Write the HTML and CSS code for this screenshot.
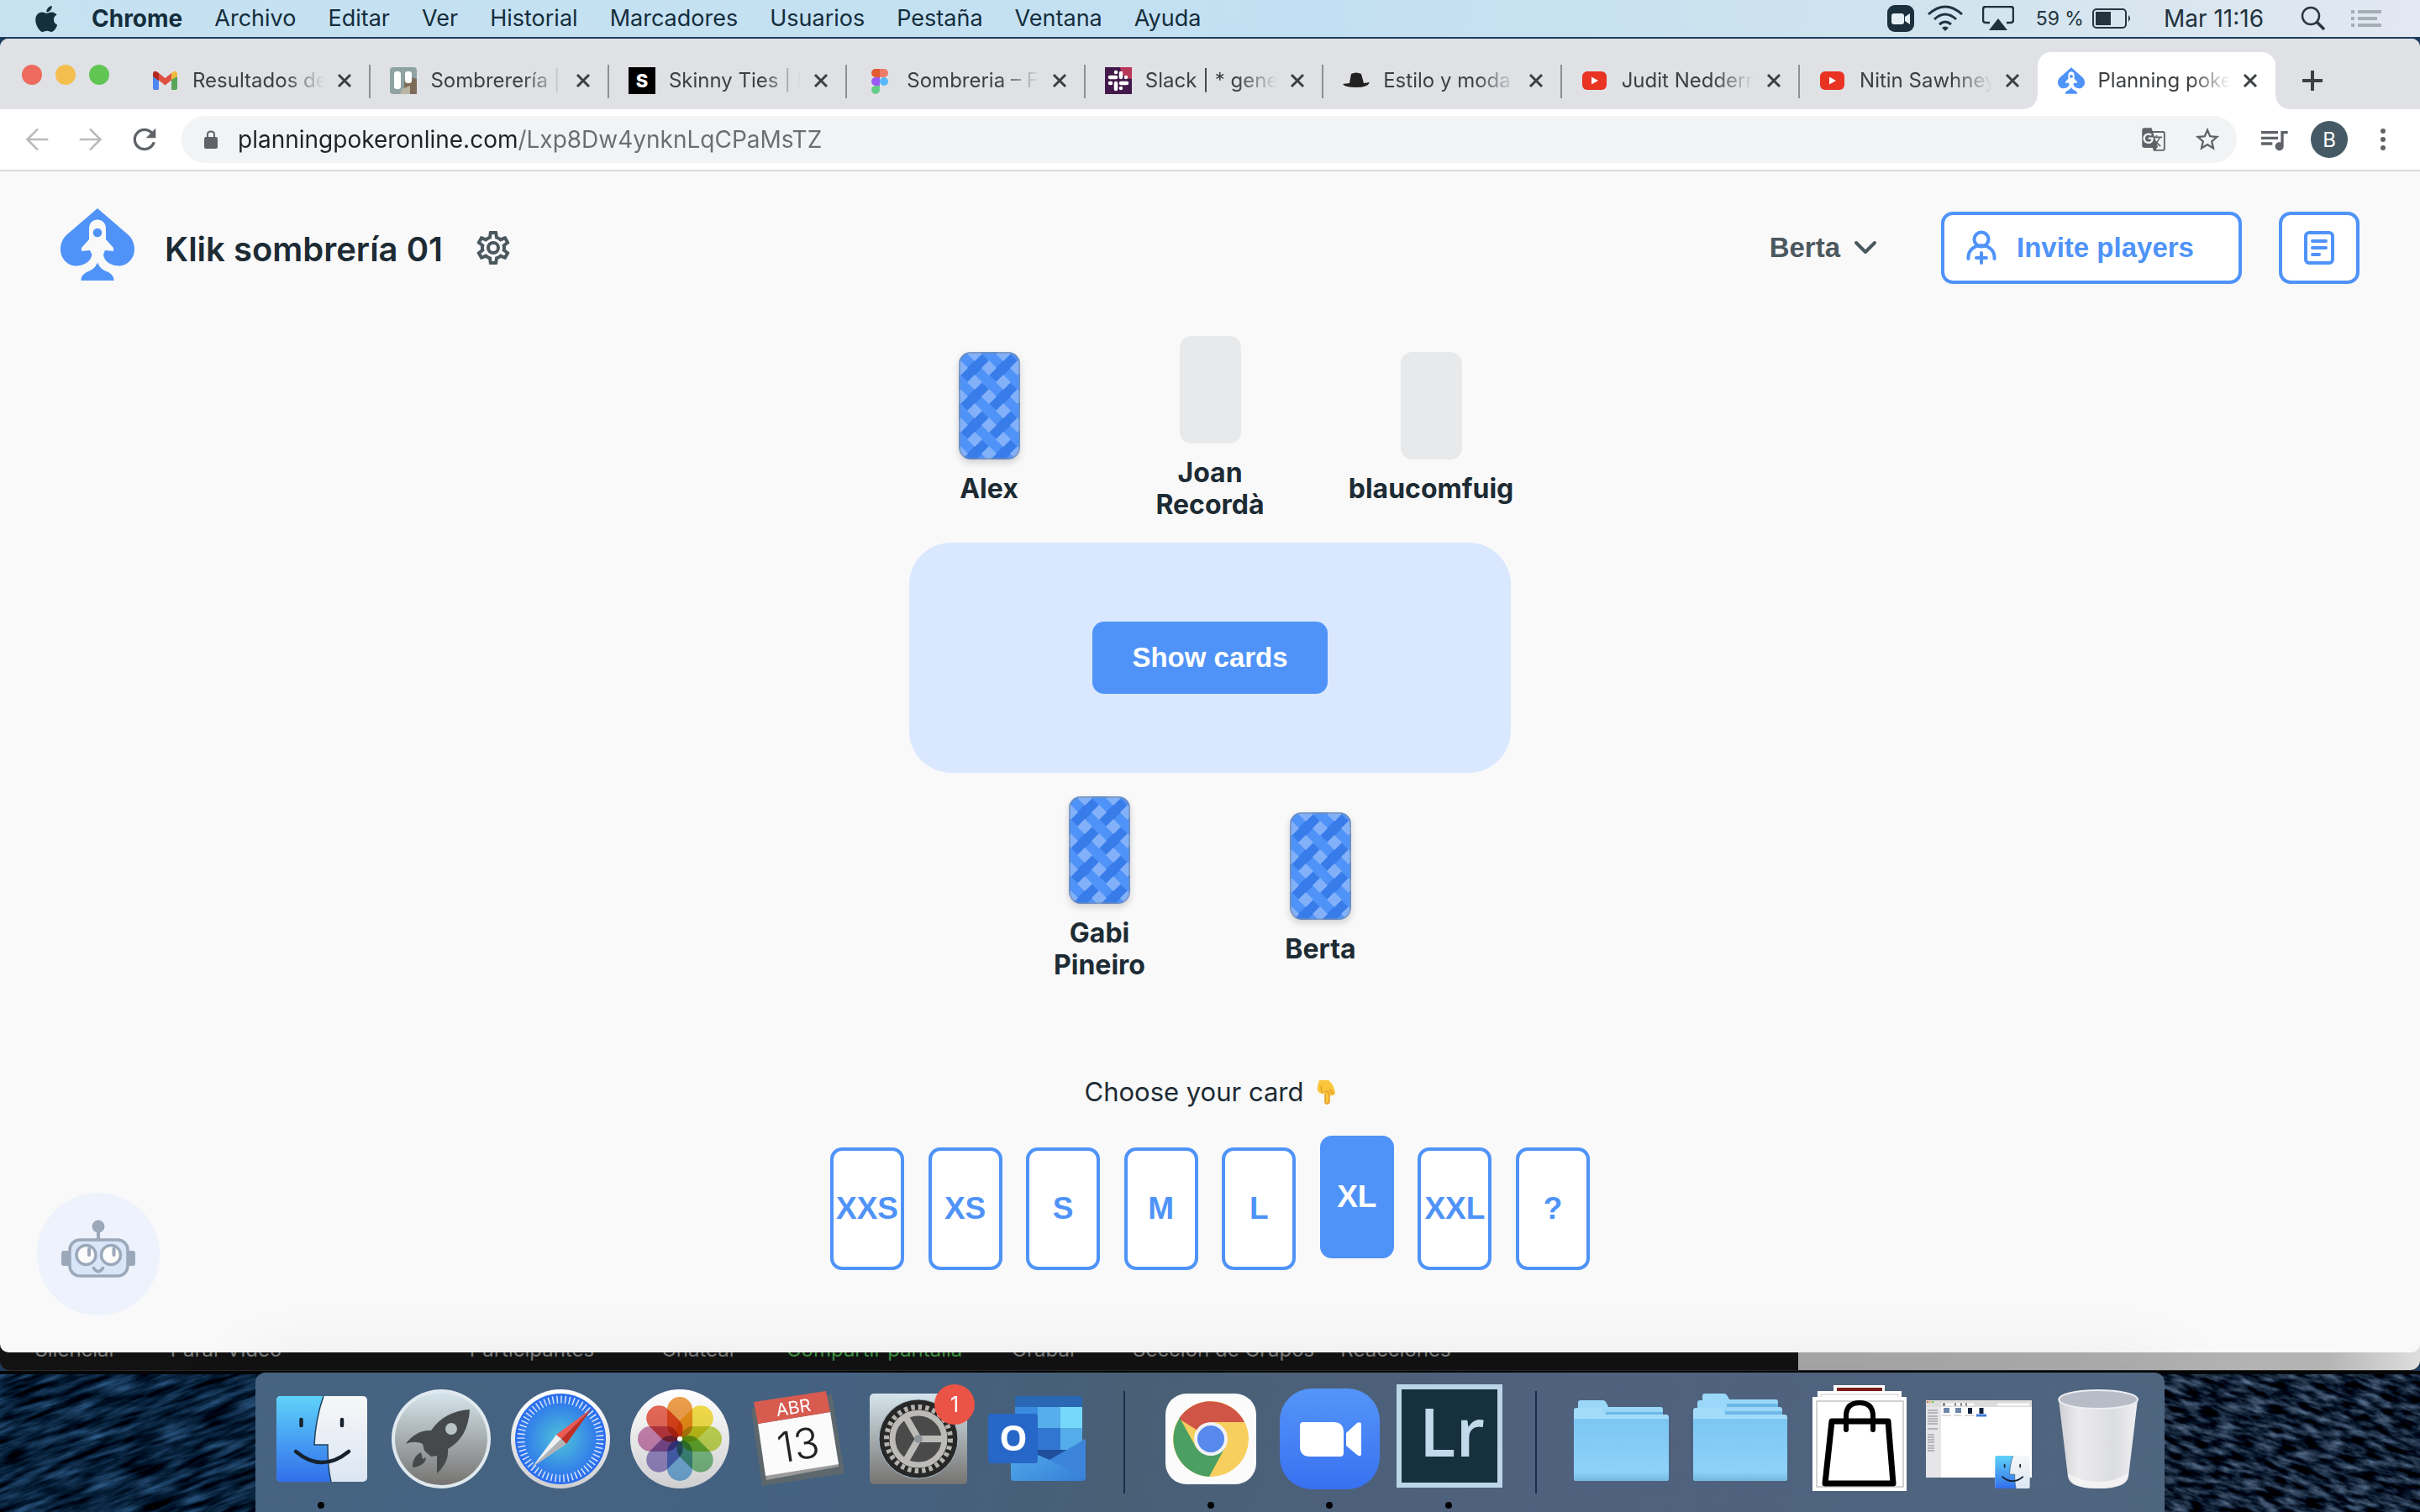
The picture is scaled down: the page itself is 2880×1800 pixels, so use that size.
FILE: index.html
```html
<!DOCTYPE html>
<html lang="es">
<head>
<meta charset="utf-8">
<title>Planning poker</title>
<link rel="stylesheet" href="styles.css">
</head>
<body>

<svg class="defs" aria-hidden="true">
  <defs>
    <pattern id="weave" x="2" y="2" width="34" height="34" patternUnits="userSpaceOnUse">
      <rect width="34" height="34" fill="#4f93f8"/>
      <path d="M0 25L9 34L34 9L25 0Z" fill="#387cea"/>
      <path d="M8 0H26L17 9ZM8 34H26L17 25ZM0 8V26L9 17ZM34 8V26L25 17Z" fill="#83b1f9"/>
    </pattern>
    <linearGradient id="finderBlue" x2="0" y2="1"><stop stop-color="#5fd2f9"/><stop offset="1" stop-color="#326fec"/></linearGradient>
    <linearGradient id="finderWhite" x2="0" y2="1"><stop stop-color="#f7f7f8"/><stop offset="1" stop-color="#dbe6f3"/></linearGradient>
    <linearGradient id="steel" x2="0" y2="1"><stop stop-color="#d5e5ec"/><stop offset="1" stop-color="#767472"/></linearGradient>
    <linearGradient id="silver" x2="0" y2="1"><stop stop-color="#fff"/><stop offset="1" stop-color="#cfcfd1"/></linearGradient>
    <radialGradient id="sky"><stop stop-color="#4fc3d8"/><stop offset="1" stop-color="#2a6bef"/></radialGradient>
    <linearGradient id="zoomBlue" x2="0" y2="1"><stop stop-color="#5595f8"/><stop offset="1" stop-color="#3871f1"/></linearGradient>
    <linearGradient id="folderBlue" x2="0" y2="1"><stop stop-color="#7dc6f3"/><stop offset=".85" stop-color="#8dd2f8"/><stop offset="1" stop-color="#74b7e0"/></linearGradient>
    <linearGradient id="glass"><stop stop-color="#cfd0d4"/><stop offset=".25" stop-color="#ebebed"/><stop offset=".7" stop-color="#dcdde0"/><stop offset="1" stop-color="#f0f0f2"/></linearGradient>
    <linearGradient id="mail" x2="1" y2="1"><stop stop-color="#55b0ee"/><stop offset="1" stop-color="#357fd6"/></linearGradient>
    <symbol id="finder" viewBox="0 0 108 102">
      <rect width="108" height="102" rx="5" fill="url(#finderWhite)"/>
      <path d="M5 0H56C49 20 46 38 45 58H61C61 76 62 90 65 102H5Q0 102 0 97V5Q0 0 5 0Z" fill="url(#finderBlue)"/>
      <path d="M56 0C49 20 46 38 45 58H61C61 76 62 90 65 102" fill="none" stroke="#20435f" stroke-width="1.500"/>
      <path d="M29.500 28V35M78 28V35M23 66Q54 92 86 66" fill="none" stroke="#15222e" stroke-width="4.500" stroke-linecap="round"/>
    </symbol>
    <symbol id="spade" viewBox="0 0 88 86">
      <path d="M44 0L80 31C86 36 88 43 88 49C88 60 79 68.500 70 68.500C61 68.500 52 64 51 55L53 50L63 51V47L54 37V24C54 10 34 10 34 24V37L25 47V51L35 50L37.500 55C36 64 27 68.500 18 68.500C9 68.500 0 60 0 49C0 43 2 36 8 31Z"/>
      <circle cx="44" cy="29" r="5.300"/>
      <path d="M44 64.500C47 72 52 74 57 76C62 79 63.500 82 63.500 86H24.500C24.500 82 26 79 31 76C36 74 41 72 44 64.500Z"/>
    </symbol>
    <symbol id="close" viewBox="0 0 20 20"><path d="M3 3L17 17M17 3L3 17" stroke="#3c4043" stroke-width="3"/></symbol>
    <symbol id="youtube" viewBox="0 0 32 32"><rect x="1" y="5" width="29" height="22" rx="6" fill="#e93323"/><path d="M12 11.500L20 16L12 20.500Z" fill="#fff"/></symbol>
  </defs>
</svg>

<header class="menubar">
  <nav class="menus" aria-label="Menú">
    <svg class="apple" viewBox="4 32 368 448" fill="#162f3e"><path d="M318.700 268.700c-.2-36.700 16.400-64.400 50-84.800-18.800-26.900-47.200-41.700-84.700-44.600-35.500-2.800-74.300 20.700-88.500 20.700-15 0-49.400-19.700-76.400-19.700C63.300 141.200 4 184.800 4 273.500q0 39.300 14.400 81.200c12.800 36.700 59 126.700 107.200 125.200 25.200-.6 43-17.900 75.800-17.900 31.800 0 48.300 17.900 76.400 17.900 48.600-.7 90.400-82.500 102.600-119.300-65.200-30.700-61.700-90-61.700-91.900zm-56.600-164.200c27.300-32.400 24.800-61.900 24-72.500-24.100 1.400-52 16.400-67.900 34.900-17.500 19.800-27.800 44.300-25.600 71.900 26.100 2 49.900-11.400 69.500-34.300z"/></svg>
    <a class="app-name" href="#">Chrome</a>
    <a href="#">Archivo</a>
    <a href="#">Editar</a>
    <a href="#">Ver</a>
    <a href="#">Historial</a>
    <a href="#">Marcadores</a>
    <a href="#">Usuarios</a>
    <a href="#">Pestaña</a>
    <a href="#">Ventana</a>
    <a href="#">Ayuda</a>
  </nav>
  <div class="status">
    <svg width="32" height="32" viewBox="0 0 32 32"><rect width="32" height="32" rx="9" fill="#1a303d"/><rect x="5" y="10" width="15" height="13" rx="3" fill="#e4eff5"/><path d="M21 14L27 10V23L21 19Z" fill="#e4eff5"/></svg>
    <svg class="wifi" width="42" height="32" viewBox="0 0 42 32" fill="none" stroke="#1f3441" stroke-width="3"><path d="M1 11Q21 -7 41 11M8 17Q21 5 34 17M14 23Q21 17 28 23"/><path d="M17 27L21 31L25 27Q21 24 17 27Z" fill="#1f3441" stroke="none"/></svg>
    <svg class="airplay" width="38" height="30" viewBox="0 0 38 30"><path d="M9 20H4Q1 20 1 17V4Q1 1 4 1H34Q37 1 37 4V17Q37 20 34 20H29" fill="none" stroke="#22323d" stroke-width="2.500"/><path d="M19 15L30 29H8Z" fill="#22323d"/></svg>
    <span class="battery-level">59 %</span>
    <svg class="battery" width="47" height="24" viewBox="0 0 47 24"><rect x="1" y="1" width="39" height="22" rx="4" fill="none" stroke="#25343f" stroke-width="2"/><rect x="4" y="4" width="18" height="16" fill="#25343f"/><path d="M43 8Q47 12 43 16Z" fill="#25343f"/></svg>
    <time class="clock">Mar 11:16</time>
    <svg class="search" width="30" height="30" viewBox="0 0 30 30" fill="none" stroke="#2a3640" stroke-width="2.500"><circle cx="12" cy="12" r="10"/><path d="M19 19L28 28" stroke-width="3.500"/></svg>
    <svg width="36" height="22" viewBox="0 0 36 22" stroke="#a7adb5" stroke-width="4"><path d="M0 3H4M8 3H36M0 11H4M8 11H31M0 19H4M8 19H36"/></svg>
  </div>
</header>

<main class="window">
  <div class="tabstrip">
    <div class="lights"><span class="light red"></span><span class="light yellow"></span><span class="light green"></span></div>
    <div class="tabs">
      <div class="tab">
        <svg class="favicon" viewBox="0 0 32 32"><path d="M1 8V25Q1 27 3 27H8V14Z" fill="#4e87ee"/><path d="M30 8V25Q30 27 28 27H23V14Z" fill="#57a55b"/><path d="M23 15V7L26 5Q30 4 30 9V11Z" fill="#f3bb41"/><path d="M1 9Q1 4 5 5L8 7V16L1 11Z" fill="#b3271e"/><path d="M8 7L15.500 13L23 7V15.500L15.500 21.500L8 15.500Z" fill="#df5040"/></svg>
        <span class="tab-title">Resultados de</span><button class="tab-close" aria-label="Cerrar"><svg><use href="#close"/></svg></button>
      </div>
      <div class="tab">
        <svg class="favicon" viewBox="0 0 32 32"><rect width="32" height="32" rx="4" fill="#8ea3a2"/><path d="M18 10L32 14V32H16Z" fill="#7d6b58"/><path d="M14 26L24 22V32H12Z" fill="#b9b5a3"/><rect x="5" y="5" width="8" height="21" rx="3" fill="#fff"/><rect x="18" y="5" width="8" height="14" rx="3" fill="#fff"/></svg>
        <span class="tab-title">Sombrerería |</span><button class="tab-close" aria-label="Cerrar"><svg><use href="#close"/></svg></button>
      </div>
      <div class="tab">
        <svg class="favicon" viewBox="0 0 32 32"><rect width="32" height="32"/><text x="16" y="24" text-anchor="middle" font-family="Inter, sans-serif" font-weight="800" font-size="22" fill="#fff">S</text></svg>
        <span class="tab-title">Skinny Ties | I</span><button class="tab-close" aria-label="Cerrar"><svg><use href="#close"/></svg></button>
      </div>
      <div class="tab">
        <svg class="favicon" viewBox="0 0 32 32"><path d="M16 2H11A5 5 0 0 0 11 12H16Z" fill="#e25a30"/><path d="M16 2H21A5 5 0 0 1 21 12H16Z" fill="#ee7b69"/><path d="M16 12H11A5 5 0 0 0 11 22H16Z" fill="#9a59f7"/><circle cx="21" cy="17" r="5" fill="#57b8fa"/><path d="M16 22H11A5 5 0 1 0 16 27Z" fill="#66cd88"/></svg>
        <span class="tab-title">Sombreria – F</span><button class="tab-close" aria-label="Cerrar"><svg><use href="#close"/></svg></button>
      </div>
      <div class="tab">
        <svg class="favicon" viewBox="0 0 32 32"><rect width="32" height="32" fill="#42194a"/><path d="M18 0H32V14Q20 14 18 0Z" fill="#b8385a"/><g stroke="#fff" stroke-width="4.500" stroke-linecap="round"><path d="M13 6V6.100M6 12H13M19 7V12M25 12V12.100M6 19H7M13 19V26M19 19H26M19 25V25.100"/></g></svg>
        <span class="tab-title">Slack | * gene</span><button class="tab-close" aria-label="Cerrar"><svg><use href="#close"/></svg></button>
      </div>
      <div class="tab">
        <svg class="favicon" viewBox="0 0 32 32" fill="#22211f"><path d="M8 19L10 8Q16 5 22 8L25 19L32 18Q30 24 16 24Q2 24 0 20Z"/></svg>
        <span class="tab-title">Estilo y moda</span><button class="tab-close" aria-label="Cerrar"><svg><use href="#close"/></svg></button>
      </div>
      <div class="tab">
        <svg class="favicon"><use href="#youtube"/></svg>
        <span class="tab-title">Judit Nedderm</span><button class="tab-close" aria-label="Cerrar"><svg><use href="#close"/></svg></button>
      </div>
      <div class="tab last">
        <svg class="favicon"><use href="#youtube"/></svg>
        <span class="tab-title">Nitin Sawhney</span><button class="tab-close" aria-label="Cerrar"><svg><use href="#close"/></svg></button>
      </div>
      <div class="tab active">
        <svg class="favicon" fill="#4f93f8"><use href="#spade"/></svg>
        <span class="tab-title">Planning poke</span><button class="tab-close" aria-label="Cerrar"><svg><use href="#close"/></svg></button>
      </div>
    </div>
    <button class="new-tab" aria-label="Nueva pestaña"><svg width="26" height="26" viewBox="0 0 26 26"><path d="M13 1V25M1 13H25" stroke="#3c4043" stroke-width="4"/></svg></button>
  </div>

  <div class="toolbar">
    <button class="nav-button off" aria-label="Atrás"><svg viewBox="0 0 24 24" width="40" height="40"><path d="M20 11.200H7L13.200 5L12 4L4 12L12 20L13.200 19L7 12.800H20Z"/></svg></button>
    <button class="nav-button off" aria-label="Adelante"><svg viewBox="0 0 24 24" width="40" height="40"><path d="M4 11.200H17L10.800 5L12 4L20 12L12 20L10.800 19L17 12.800H4Z"/></svg></button>
    <button class="nav-button" aria-label="Recargar"><svg viewBox="0 0 24 24" width="40" height="40"><path d="M17.650 6.350C16.200 4.900 14.210 4 12 4c-4.420 0-7.990 3.580-7.990 8s3.570 8 7.990 8c3.730 0 6.840-2.550 7.730-6h-2.080c-.82 2.330-3.040 4-5.650 4-3.310 0-6-2.690-6-6s2.690-6 6-6c1.660 0 3.140.69 4.220 1.780L13 11h7V4l-2.350 2.350z"/></svg></button>
    <div class="omnibox">
      <svg width="16" height="22" viewBox="0 0 16 22"><rect y="8" width="16" height="14" rx="2" fill="#5f6368"/><path d="M4 9V5Q4 1.500 8 1.500Q12 1.500 12 5V9" fill="none" stroke="#5f6368" stroke-width="2"/></svg>
      <input class="url" type="text" aria-label="Dirección" value="planningpokeronline.com/Lxp8Dw4ynknLqCPaMsTZ">
      <button class="nav-button" aria-label="Traducir"><svg viewBox="0 0 24 24" width="30" height="30"><path d="M21 4H11l-1-3H3c-1.100 0-2 .9-2 2v15c0 1.100.9 2 2 2h8l1 3h9c1.100 0 2-.9 2-2V6c0-1.100-.9-2-2-2zM7 16c-2.760 0-5-2.240-5-5s2.240-5 5-5c1.350 0 2.480.5 3.350 1.300L9.030 8.570c-.38-.36-1.040-.78-2.030-.78-1.740 0-3.150 1.440-3.150 3.210S5.260 14.210 7 14.210c2.010 0 2.840-1.440 2.920-2.410H7v-1.710h4.680c.07.31.12.61.12 1.020C11.800 13.970 9.890 16 7 16zm6.170-5.420h3.700c-.43 1.250-1.110 2.430-2.050 3.470-.31-.35-.6-.72-.86-1.100l-.79-2.370zm8.330 9.920c0 .55-.45 1-1 1H14l2-2.500-1.040-3.100 3.100 3.100.92-.92-3.300-3.250.02-.02c1.130-1.250 1.930-2.690 2.400-4.220H20v-1.300h-4.530V8h-1.290v1.290h-1.440L11.460 5.500h9.040c.55 0 1 .45 1 1v14z"/></svg></button>
      <button class="nav-button" aria-label="Añadir a marcadores"><svg viewBox="0 0 24 24" width="34" height="34"><path d="M22 9.240l-7.190-.62L12 2 9.190 8.630 2 9.240l5.460 4.730L5.820 21 12 17.270 18.180 21l-1.630-7.030L22 9.240zM12 15.400l-3.760 2.270 1-4.280-3.320-2.880 4.380-.38L12 6.100l1.710 4.040 4.380.38-3.320 2.880 1 4.280L12 15.400z"/></svg></button>
    </div>
    <button class="nav-button" aria-label="Multimedia"><svg viewBox="0 0 24 24" width="40" height="40"><path d="M15 6H3v2h12V6zm0 4H3v2h12v-2zM3 16h8v-2H3v2zM17 6v8.180c-.31-.11-.65-.18-1-.18-1.660 0-3 1.340-3 3s1.340 3 3 3 3-1.340 3-3V8h3V6h-5z"/></svg></button>
    <button class="avatar" aria-label="Perfil">B</button>
    <button class="nav-button more" aria-label="Más"><svg width="8" height="28" viewBox="0 0 8 28"><circle cx="4" cy="4" r="3"/><circle cx="4" cy="14" r="3"/><circle cx="4" cy="24" r="3"/></svg></button>
  </div>

  <div class="page">
    <div class="page-head">
      <svg class="logo" width="88" height="86" fill="#4f93f8"><use href="#spade"/></svg>
      <h1>Klik sombrería 01</h1>
      <button class="plain" aria-label="Ajustes"><svg viewBox="0 0 24 24" width="48" height="48" fill="#4b585e"><path d="M12,8A4,4 0 0,1 16,12A4,4 0 0,1 12,16A4,4 0 0,1 8,12A4,4 0 0,1 12,8M12,10A2,2 0 0,0 10,12A2,2 0 0,0 12,14A2,2 0 0,0 14,12A2,2 0 0,0 12,10M10,22C9.750,22 9.540,21.820 9.500,21.580L9.130,18.930C8.500,18.680 7.960,18.340 7.440,17.940L4.950,18.950C4.730,19.030 4.460,18.950 4.340,18.730L2.340,15.270C2.210,15.050 2.270,14.780 2.460,14.630L4.570,12.970L4.500,12L4.570,11L2.460,9.370C2.270,9.220 2.210,8.950 2.340,8.730L4.340,5.270C4.460,5.050 4.730,4.960 4.950,5.050L7.440,6.050C7.960,5.660 8.500,5.320 9.130,5.070L9.500,2.420C9.540,2.180 9.750,2 10,2H14C14.250,2 14.460,2.180 14.500,2.420L14.870,5.070C15.500,5.320 16.040,5.660 16.560,6.050L19.050,5.050C19.270,4.960 19.540,5.050 19.660,5.270L21.660,8.730C21.790,8.950 21.730,9.220 21.540,9.370L19.430,11L19.500,12L19.430,13L21.540,14.630C21.730,14.780 21.790,15.050 21.660,15.270L19.660,18.730C19.540,18.950 19.270,19.040 19.050,18.950L16.560,17.950C16.040,18.340 15.500,18.680 14.870,18.930L14.500,21.580C14.460,21.820 14.250,22 14,22H10M11.250,4L10.880,6.610C9.680,6.860 8.620,7.500 7.850,8.390L5.440,7.350L4.690,8.650L6.800,10.200C6.400,11.370 6.400,12.640 6.800,13.800L4.680,15.360L5.430,16.660L7.860,15.620C8.630,16.500 9.680,17.140 10.870,17.380L11.240,20H12.760L13.130,17.390C14.320,17.140 15.370,16.500 16.140,15.620L18.570,16.660L19.320,15.360L17.200,13.810C17.600,12.640 17.600,11.370 17.200,10.200L19.310,8.650L18.560,7.350L16.150,8.390C15.380,7.500 14.320,6.860 13.120,6.620L12.750,4H11.250Z"/></svg></button>
      <div class="head-actions">
        <button class="user">Berta <svg width="28" height="18" viewBox="0 0 28 18" fill="none" stroke="#4b585e" stroke-width="4" stroke-linecap="round" stroke-linejoin="round"><path d="M3 3L14 14L25 3"/></svg></button>
        <button class="outline invite"><svg width="36" height="42" viewBox="0 0 36 42" fill="none" stroke="#4f93f8" stroke-width="4" stroke-linecap="round"><circle cx="18" cy="11" r="8.500"/><path d="M2.500 34C1 13 35 13 33.500 34M18 27V39M12 33H24"/></svg>Invite players</button>
        <button class="outline issues" aria-label="Issues"><svg width="38" height="42" viewBox="0 0 38 42" fill="none" stroke="#4f93f8" stroke-width="4" stroke-linecap="round"><rect x="3" y="3" width="32" height="36" rx="4"/><path d="M11 13H27M11 21H27M11 29H19"/></svg></button>
      </div>
    </div>

    <section class="game">
      <div class="row">
        <div class="player"><svg class="card"><rect class="card-back" width="100%" height="100%" fill="url(#weave)"/></svg><span class="name">Alex</span></div>
        <div class="player"><div class="card empty"></div><span class="name">Joan Recordà</span></div>
        <div class="player"><div class="card empty"></div><span class="name">blaucomfuig</span></div>
      </div>
      <div class="table"><button class="show">Show cards</button></div>
      <div class="row">
        <div class="player"><svg class="card"><rect class="card-back" width="100%" height="100%" fill="url(#weave)"/></svg><span class="name">Gabi Pineiro</span></div>
        <div class="player"><svg class="card"><rect class="card-back" width="100%" height="100%" fill="url(#weave)"/></svg><span class="name">Berta</span></div>
      </div>
    </section>

    <section class="picker">
      <p class="prompt">Choose your card <svg width="24" height="30" viewBox="0 0 24 30"><path d="M4 1H15Q19 4 21 9L23 15Q23 19 19 19Q17 20 16 18V27Q15 30 13 29Q11 29 11 27V17Q7 18 3 15Q1 12 2 8Z" fill="#f9c63c"/><path d="M11 17V27Q11 29 13 29Q16 29 16 26V18M16 18Q15 14 11 14M20 18Q19 13 16 12M7 8Q5 11 8 16" fill="none" stroke="#e59b2c" stroke-width="1.500"/></svg></p>
      <div class="deck">
        <button class="choice">XXS</button>
        <button class="choice">XS</button>
        <button class="choice">S</button>
        <button class="choice">M</button>
        <button class="choice">L</button>
        <button class="choice chosen" aria-pressed="true">XL</button>
        <button class="choice">XXL</button>
        <button class="choice">?</button>
      </div>
    </section>

    <button class="bot" aria-label="Chat"><svg width="88" height="70" viewBox="0 0 88 70"><g fill="#9ba8b9"><circle cx="44" cy="8" r="7.500"/><path d="M42 14H46V24H42Z"/><rect y="37" width="12" height="18" rx="3"/><rect x="76" y="37" width="12" height="18" rx="3"/></g><rect x="10" y="24" width="69" height="43" rx="12" fill="#d9e6fa" stroke="#9ba8b9" stroke-width="3.500"/><circle cx="29.500" cy="42" r="11.500" fill="#fcfcfc" stroke="#9ba8b9" stroke-width="3.500"/><circle cx="59" cy="42" r="11.500" fill="#fcfcfc" stroke="#9ba8b9" stroke-width="3.500"/><path d="M33 35V42M62.500 35V42" stroke="#9ba8b9" stroke-width="4" stroke-linecap="round"/><path d="M38.500 57.500Q44 66 49.500 57.500" fill="none" stroke="#9ba8b9" stroke-width="3.500" stroke-linecap="round"/></svg></button>
  </div>
</main>

<div class="call">
  <div class="call-bar">
    <span>Silenciar</span><span>Parar Vídeo</span><span></span><span>Participantes</span><span>Chatear</span><span class="share">Compartir pantalla</span><span>Grabar</span><span>Sección de Grupos</span><span>Reacciones</span>
  </div>
  <div class="call-side"></div>
</div>

<footer class="desktop">
  <svg class="sea" width="100%" height="100%" preserveAspectRatio="none">
    <filter id="waves" x="0" y="0" width="100%" height="100%" color-interpolation-filters="sRGB"><feTurbulence type="fractalNoise" baseFrequency=".02 .14" numOctaves="4" seed="4"/><feColorMatrix values=".4 0 0 0 -.17  .6 0 0 0 -.17  .8 0 0 0 -.17  0 0 0 0 1"/></filter>
    <filter id="chop" x="0" y="0" width="100%" height="100%" color-interpolation-filters="sRGB"><feTurbulence type="fractalNoise" baseFrequency=".04 .14" numOctaves="5" seed="9"/><feColorMatrix values=".8 0 0 0 -.33  .9 0 0 0 -.32  1 0 0 0 -.29  0 0 0 0 1"/></filter>
    <rect x="-300" y="-100" width="900" height="600" filter="url(#waves)" transform="rotate(-20)"/>
    <svg x="85%" width="15%" height="100%"><rect x="-200" y="-300" width="900" height="700" filter="url(#chop)" transform="rotate(18)"/></svg>
  </svg>
  <nav class="dock" aria-label="Dock">
    <button class="app" aria-label="Finder"><svg viewBox="0 0 142 166"><use href="#finder" x="18" y="28" width="108" height="102"/><circle cx="71" cy="158" r="4"/></svg></button>
    <button class="app" aria-label="Launchpad"><svg viewBox="0 0 142 166"><circle cx="72" cy="79" r="59" fill="#dfe9ee"/><circle cx="72" cy="79" r="55" fill="url(#steel)"/><path d="M106 44C105 66 96 82 80 91C81 102 76 112 67 120L67 99L60 100L52 93L50 85C44 82 37 82 30 85C37 74 49 68 60 69C70 54 86 45 106 44ZM48 95C40 99 38 106 38 113C47 112 54 108 54 101L50 103Z" fill="#45494c"/><circle cx="84" cy="67" r="7" fill="#b9c3c8"/></svg></button>
    <button class="app" aria-label="Safari"><svg viewBox="0 0 142 166"><circle cx="72" cy="79" r="59" fill="url(#silver)"/><circle cx="72" cy="79" r="54" fill="url(#sky)"/><circle cx="72" cy="79" r="47" fill="none" stroke="#fff" stroke-width="9" stroke-dasharray="1.500 3.420" opacity=".8"/><path d="M109 43L67 74L73 79Z" fill="#ee5a50"/><path d="M109 43L79 85L73 79Z" fill="#c22f24"/><path d="M38 113L67 74L73 79Z" fill="#f0f0f0"/><path d="M38 113L79 85L73 79Z" fill="#b3b3b5"/></svg></button>
    <button class="app" aria-label="Fotos"><svg viewBox="0 0 142 166"><circle cx="72" cy="79" r="59" fill="url(#silver)"/><g class="petals" transform="translate(72 79)"><rect x="-15" y="-50" width="30" height="49" rx="15" fill="#f0a04b"/><rect x="-15" y="-50" width="30" height="49" rx="15" fill="#f6e14a" transform="rotate(45)"/><rect x="-15" y="-50" width="30" height="49" rx="15" fill="#c5da55" transform="rotate(90)"/><rect x="-15" y="-50" width="30" height="49" rx="15" fill="#80c48a" transform="rotate(135)"/><rect x="-15" y="-50" width="30" height="49" rx="15" fill="#79b6e6" transform="rotate(180)"/><rect x="-15" y="-50" width="30" height="49" rx="15" fill="#9c8dcb" transform="rotate(225)"/><rect x="-15" y="-50" width="30" height="49" rx="15" fill="#cc86b4" transform="rotate(270)"/><rect x="-15" y="-50" width="30" height="49" rx="15" fill="#ea6a58" transform="rotate(315)"/></g><circle cx="72" cy="79" r="3" fill="#fff"/></svg></button>
    <button class="app" aria-label="Calendario"><svg viewBox="0 0 142 166"><path d="M15 43L111 26L126 120L28 135Z" fill="#5d686d"/><path d="M32 120L119 107V112L33 128Z" fill="#9c9c9c"/><path d="M23 61L109 47L119 109L32 123Z" fill="#fbfbfb"/><path d="M18 35L104 22L109 47L23 61Z" fill="#d85b50"/><g font-family="Inter, sans-serif" text-anchor="middle"><text x="65" y="49" font-size="21" fill="#fff" transform="rotate(-9 65 41)">ABR</text><text x="71" y="104" font-size="50" font-weight="300" fill="#222" transform="rotate(-9 71 86)">13</text></g></svg></button>
    <button class="app" aria-label="Preferencias"><svg viewBox="0 0 142 166"><rect x="14" y="25" width="116" height="108" rx="5" fill="url(#steel)"/><circle cx="72" cy="79" r="47" fill="#272727" stroke="#a9bccb"/><circle cx="72" cy="79" r="38" fill="none" stroke="#b5b3b0" stroke-width="6" stroke-dasharray="4.500 4"/><circle cx="72" cy="79" r="31" fill="#4a4a4a" stroke="#bdbbb8" stroke-width="7"/><path d="M72 79H102M72 79L57 53M72 79L57 105" stroke="#bdbbb8" stroke-width="8"/><circle cx="72" cy="79" r="5" fill="#8e9498"/><circle cx="115" cy="38" r="24" fill="#ea5345"/><text x="115" y="47" font-family="Inter, sans-serif" font-size="26" fill="#fff" text-anchor="middle">1</text></svg></button>
    <button class="app" aria-label="Outlook"><svg viewBox="0 0 142 166"><rect x="45" y="28" width="80" height="76" rx="4" fill="#2a67b4"/><path d="M45 41H72V66H45Z" fill="#3b8be0"/><path d="M72 41H99V66H72Z" fill="#56aeea"/><path d="M99 41H125V66H99Z" fill="#76d9fc"/><path d="M45 66H99V92H45Z" fill="#3176d0"/><path d="M99 66H125V92H99Z" fill="#54ace9"/><path d="M45 92H125V104H45Z" fill="#1f4f9c"/><path d="M40 84L86 104L129 79V125Q129 129 125 129H44Q40 129 40 125Z" fill="url(#mail)"/><path d="M86 104L129 79V126Z" fill="#3c85da"/><rect x="13" y="49" width="59" height="59" rx="4" fill="#2767c8"/><text x="43" y="93" font-family="Open Sans, sans-serif" font-weight="700" font-size="42" fill="#fff" text-anchor="middle">O</text></svg></button>
    <span class="divider"></span>
    <button class="app" aria-label="Chrome"><svg viewBox="0 0 142 166"><rect x="18" y="25" width="108" height="108" rx="25" fill="#fbfbfb"/><circle cx="72" cy="79" r="45" fill="#f7cf5e"/><path d="M72 79L34 55A45 45 0 0 1 112 59H72Z" fill="#d05547"/><path d="M35 54L55 90L89 89L70 124A45 45 0 0 1 35 54Z" fill="#4b9f62"/><circle cx="72" cy="79" r="20" fill="#f2f2f4"/><circle cx="72" cy="79" r="16" fill="#5889ec"/><circle cx="72" cy="158" r="4"/></svg></button>
    <button class="app" aria-label="Zoom"><svg viewBox="0 0 142 166"><rect x="12" y="19" width="119" height="120" rx="38" fill="url(#zoomBlue)"/><path d="M40 59H76Q88 59 88 71V96Q88 100 84 100H48Q36 100 36 88V63Q36 59 40 59ZM91 72L104 60Q109 58 109 62V97Q109 101 104 98L91 87Z" fill="#fff"/><circle cx="71" cy="158" r="4"/></svg></button>
    <button class="app" aria-label="Lightroom"><svg viewBox="0 0 142 166"><rect x="12" y="17" width="120" height="117" fill="#16303d" stroke="#bcd6e8" stroke-width="6"/><text x="36" y="100" font-family="Open Sans, sans-serif" font-weight="600" font-size="80" fill="#c1d9ea">Lr</text><circle cx="71" cy="158" r="4"/></svg></button>
    <span class="divider"></span>
    <button class="app" aria-label="Carpeta"><svg viewBox="0 0 142 166"><path d="M19 50V36Q19 33 22 33H49Q52 33 55 41H117Q120 41 120 44V60H19Z" fill="#9bd7f8"/><path d="M52 47H120V56H52Z" fill="#6cb9e8"/><path d="M14 45Q14 42 17 42H45Q48 42 51 50H124Q127 50 127 53V126Q127 129 124 129H17Q14 129 14 126Z" fill="#a3dcfb"/><path d="M14 57Q14 55 16 55H125Q127 55 127 57V126Q127 129 124 129H17Q14 129 14 126Z" fill="url(#folderBlue)"/></svg></button>
    <button class="app" aria-label="Carpetas"><svg viewBox="0 0 142 166"><path d="M25 50V28Q25 25 28 25H51Q54 25 57 32H112Q115 32 115 35V50Z" fill="#9bd7f8"/><path d="M54 37H115V46H54Z" fill="#6cb9e8"/><path d="M19 50V36Q19 33 22 33H48Q51 33 54 41H117Q120 41 120 44V60H19Z" fill="#9bd7f8"/><path d="M52 46H120V56H52Z" fill="#6cb9e8"/><path d="M14 45Q14 42 17 42H45Q48 42 51 50H123Q126 50 126 53V126Q126 129 123 129H17Q14 129 14 126Z" fill="#a3dcfb"/><path d="M14 57Q14 55 16 55H124Q126 55 126 57V126Q126 129 123 129H17Q14 129 14 126Z" fill="url(#folderBlue)"/></svg></button>
    <button class="app" aria-label="Descargas"><svg viewBox="0 0 142 166"><rect x="39" y="15" width="61" height="20" fill="#fff"/><rect x="43" y="18" width="54" height="6" fill="#7c1d1b"/><rect x="20" y="22" width="100" height="20" fill="#fff"/><path d="M24 29V26H116V29" fill="none" stroke="#c9c9c9"/><rect x="14" y="29" width="112" height="112" fill="#fff"/><rect x="19" y="34" width="103" height="102" fill="none" stroke="#c4c4c4" stroke-width="1.500"/><path d="M37 58H104L110 132H29Z" fill="none" stroke="#000" stroke-width="7" stroke-linejoin="round"/><path d="M54 68V52Q54 36 70 36Q86 36 86 52V68" fill="none" stroke="#000" stroke-width="6" stroke-linecap="round"/></svg></button>
    <button class="app" aria-label="Ventana minimizada"><svg viewBox="0 0 142 166"><rect x="7" y="33" width="126" height="92" fill="#fff"/><rect x="7" y="33" width="126" height="8" fill="#dcdcdc"/><rect x="7" y="41" width="18" height="84" fill="#e6e6e8"/><path d="M8 35H10" stroke="#ec6a5e" stroke-width="2"/><path d="M11 35H13" stroke="#f4bf4f" stroke-width="2"/><path d="M14 35H16" stroke="#61c554" stroke-width="2"/><path d="M25 38H64M92 38H130" stroke="#fafafa" stroke-width="3"/><path d="M27 38H30M41 38H43M48 38H50M54 38H56" stroke="#777" stroke-width="3"/><path d="M9 45H21M9 48H21M9 52H21M9 55H21M9 58H21M9 61H21M9 67H21M9 74H17M9 77H17M9 80H17M9 83H17M9 87H17M9 90H17M9 93H17" stroke="#a5a5a8" stroke-width="1.500"/><path d="M28 45H35M42 45H49" stroke="#6d86a8" stroke-width="6"/><path d="M57 45.500H62M70.500 45.500H75.500" stroke="#10213c" stroke-width="7"/><path d="M26 51H37M40 51H50M53 51H64" stroke="#b9b9b9"/><path d="M67 51H79" stroke="#3f78dc" stroke-width="3"/><use href="#finder" x="89" y="99" width="42" height="39"/></svg></button>
    <button class="app" aria-label="Papelera"><svg viewBox="0 0 142 166"><path d="M23 32L34 124Q36 138 70 138Q104 138 106 124L117 32Z" fill="url(#glass)"/><path d="M34 120Q70 140 106 120Q104 138 70 138Q36 138 34 120Z" fill="#f8f8f8" opacity=".7"/><ellipse cx="70" cy="32" rx="47" ry="11" fill="#b7bcc7" stroke="#eceef1" stroke-width="2"/></svg></button>
  </nav>
</footer>

</body>
</html>
```
FILE: styles.css
```css
* {
  box-sizing: border-box;
}

body {
  margin: 0;
  min-height: 100vh;
  display: flex;
  flex-direction: column;
  overflow: hidden;
  background: #1d3c5c;
  color: #1d2b34;
  font-family: Inter, "Liberation Sans", sans-serif;
}

button {
  padding: 0;
  border: 0;
  background: none;
  color: inherit;
  font: inherit;
}

svg {
  display: block;
  flex: none;
}

.defs {
  position: absolute;
  width: 0;
  height: 0;
}

/* Menu bar */

.menubar {
  display: flex;
  justify-content: space-between;
  height: 44px;
  margin-bottom: 2px;
  padding: 0 46px 0 42px;
  background: linear-gradient(90deg, #c6e2f1, #c3e0f2 55%, #cde3ee 75%, #e2e8f1);
  font-size: 27px;
  line-height: 44px;
  color: #142d3c;
}

.menus,
.status {
  display: flex;
  align-items: center;
}

.menus {
  gap: 38px;
}

.menus a {
  color: inherit;
  text-decoration: none;
}

.apple {
  width: 26px;
  height: 31px;
}

.menus .app-name {
  margin-left: 3px;
  font-size: 28px;
  font-weight: 700;
}

.status {
  color: #22333e;
}

.wifi {
  margin-left: 16px;
}

.airplay {
  margin-left: 23px;
}

.battery-level {
  margin: 0 10px 0 26px;
  font-size: 23px;
}

.clock {
  margin: 0 44px 0 38px;
  font-size: 28px;
}

.search {
  margin-right: 30px;
}

/* Browser window */

.window {
  position: relative;
  z-index: 1;
  flex: 1;
  display: flex;
  flex-direction: column;
  border-radius: 10px;
  overflow: hidden;
  background: #f9f9f9;
}

.tabstrip {
  display: flex;
  height: 84px;
  background: #dfe1e5;
}

.lights {
  flex: none;
  display: flex;
  gap: 16px;
  width: 157px;
  padding: 31px 0 0 26px;
}

.light {
  width: 24px;
  height: 24px;
  border-radius: 50%;
}

.red {
  background: #ec6a5e;
}

.yellow {
  background: #f4bf4f;
}

.green {
  background: #61c554;
}

.tabs {
  flex: 1;
  min-width: 0;
  display: flex;
  align-items: flex-end;
}

.tab {
  position: relative;
  flex: 1 1 0;
  min-width: 0;
  display: flex;
  align-items: center;
  height: 68px;
  padding: 0 20px 0 24px;
  font-size: 24px;
  color: #3c4043;
}

.tab::after {
  content: "";
  position: absolute;
  right: -1px;
  top: 15px;
  width: 2px;
  height: 40px;
  background: #8d9095;
}

.last::after {
  display: none;
}

.active {
  border-radius: 16px 16px 0 0;
  background: #fff;
}

.active::before,
.active::after {
  content: "";
  position: absolute;
  top: auto;
  bottom: 0;
  width: 16px;
  height: 16px;
}

.active::before {
  left: -16px;
  background: radial-gradient(circle at 0 0, transparent 15px, #fff 16px);
}

.active::after {
  right: -16px;
  background: radial-gradient(circle at 100% 0, transparent 15px, #fff 16px);
}

.favicon {
  width: 32px;
  height: 32px;
}

.tab-title {
  flex: 1;
  min-width: 0;
  margin: 0 14px 0 16px;
  overflow: hidden;
  white-space: nowrap;
  line-height: 36px;
  mask-image: linear-gradient(90deg, #000 70%, transparent);
}

.tab-close svg {
  width: 20px;
  height: 20px;
}

.new-tab {
  flex: none;
  width: 172px;
  padding: 16px 0 0 31px;
}

.toolbar {
  display: flex;
  align-items: center;
  height: 74px;
  padding: 0 40px 0 24px;
  border-bottom: 2px solid #dadce0;
  background: #fff;
  gap: 24px;
}

.nav-button {
  fill: #5f6368;
}

.off {
  fill: #bababc;
}

.more {
  margin-left: 14px;
}

.omnibox {
  flex: 1;
  display: flex;
  align-items: center;
  gap: 32px;
  height: 56px;
  padding: 0 18px 0 27px;
  border-radius: 28px;
  background: #f1f3f4;
}

.url {
  flex: 1;
  min-width: 0;
  margin-left: -8px;
  padding: 0;
  border: 0;
  outline: 0;
  background: linear-gradient(90deg, #202124 333px, #6a6d71 333px);
  background-clip: text;
  color: transparent;
  font: 28px Inter, sans-serif;
  line-height: 40px;
}

.avatar {
  width: 44px;
  height: 44px;
  border-radius: 50%;
  background: #455a64;
  color: #fff;
  font-size: 24px;
}

/* Poker page */

.page {
  position: relative;
  flex: 1;
  display: flex;
  flex-direction: column;
  align-items: stretch;
}

.page-head {
  display: flex;
  align-items: center;
  padding: 48px 72px 0;
}

.logo {
  align-self: flex-start;
  margin: -4px 36px 0 0;
}

h1 {
  margin: 0 36px 0 0;
  padding-top: 4px;
  font-size: 40px;
  font-weight: 600;
  line-height: 48px;
}

.head-actions {
  margin-left: auto;
  display: flex;
  align-items: center;
  font: bold 33px "Liberation Sans", Arial, sans-serif;
}

.user {
  display: flex;
  align-items: center;
  gap: 16px;
  margin-right: 76px;
  color: #4b585e;
}

.outline {
  display: flex;
  align-items: center;
  justify-content: center;
  height: 86px;
  border: 4px solid #4f93f8;
  border-radius: 14px;
  background: #fff;
  color: #4f93f8;
}

.invite {
  justify-content: flex-start;
  gap: 24px;
  width: 358px;
  margin-right: 44px;
  padding-left: 26px;
}

.issues {
  width: 96px;
}

.game {
  display: flex;
  flex-direction: column;
  align-items: center;
  padding-top: 62px;
}

.row {
  display: flex;
  align-items: center;
}

.player {
  display: flex;
  flex-direction: column;
  align-items: center;
  gap: 16px;
  width: 263px;
}

.card {
  width: 73px;
  height: 128px;
  border-radius: 14px;
  overflow: hidden;
  box-shadow: 0 4px 8px rgba(0, 0, 0, 0.16);
}

.card-back {
  stroke: rgba(120, 140, 170, 0.6);
  stroke-width: 4;
  rx: 14px;
}

.empty {
  background: #e8e9ea;
  box-shadow: none;
}

.name {
  width: min-content;
  font-size: 32px;
  font-weight: 700;
  line-height: 38px;
  text-align: center;
}

.table {
  display: grid;
  place-items: center;
  width: 716px;
  height: 274px;
  margin: 26px 0 28px;
  border-radius: 50px;
  background: #d9e8ff;
}

.show {
  width: 280px;
  height: 86px;
  border-radius: 14px;
  background: #4f93f8;
  color: #fff;
  font: bold 33px "Liberation Sans", Arial, sans-serif;
}

.picker {
  margin-top: auto;
  padding-bottom: 98px;
}

.prompt {
  display: flex;
  align-items: center;
  justify-content: center;
  gap: 14px;
  margin: 0 0 42px;
  font-size: 31px;
  line-height: 48px;
}

.deck {
  display: flex;
  justify-content: space-between;
  width: 904px;
  margin: 0 auto;
}

.choice {
  width: 88px;
  height: 146px;
  border: 4px solid #4f93f8;
  border-radius: 14px;
  background: #fff;
  color: #4f93f8;
  font: bold 37px "Liberation Sans", Arial, sans-serif;
}

.chosen {
  margin: -14px 0 14px;
  background: #4f93f8;
  color: #fff;
}

.bot {
  position: absolute;
  left: 44px;
  bottom: 44px;
  display: grid;
  place-items: center;
  width: 146px;
  height: 146px;
  padding-bottom: 12px;
  border-radius: 50%;
  background: #edf2fc;
}

/* Call window peeking out below the browser */

.call {
  display: flex;
  height: 56px;
  margin-top: -34px;
  border-bottom: 1px solid #2a2a2a;
  border-radius: 0 0 12px 12px;
  overflow: hidden;
  background: #121212;
}

.call-bar {
  display: grid;
  grid-template-columns: 180px 178px 180px 190px 208px 202px 210px 212px 202px;
  width: 2140px;
  padding-top: 14px;
  color: #7c7c7c;
  font-size: 24px;
  line-height: 34px;
  text-align: center;
  white-space: nowrap;
}

.share {
  color: #3f9142;
}

.call-side {
  flex: 1;
  background: linear-gradient(90deg, #a9a9a9, #b4b4b4 85%, #dedede);
}

/* Dock */

.desktop {
  position: relative;
  z-index: 2;
  display: flex;
  justify-content: center;
  height: 168px;
  padding-top: 2px;
}

.sea {
  position: absolute;
  inset: 0;
  z-index: -1;
  border-top: 4px solid #050607;
  background: #0a1c2f;
}

.dock {
  display: flex;
  align-items: center;
  padding: 0 7px;
  border-radius: 12px 12px 0 0;
  background: linear-gradient(100deg, #466482 0%, #446181 30%, #485f76 45%, #4f617d 65%, #4e6580 100%);
  box-shadow: 0 20px 110px rgba(0, 0, 0, 0.14);
}

.app svg {
  width: 142px;
  height: 166px;
}

.petals rect {
  mix-blend-mode: multiply;
}

.divider {
  width: 2px;
  height: 122px;
  margin: 0 30px 0 32px;
  background: #15304c;
}
```
